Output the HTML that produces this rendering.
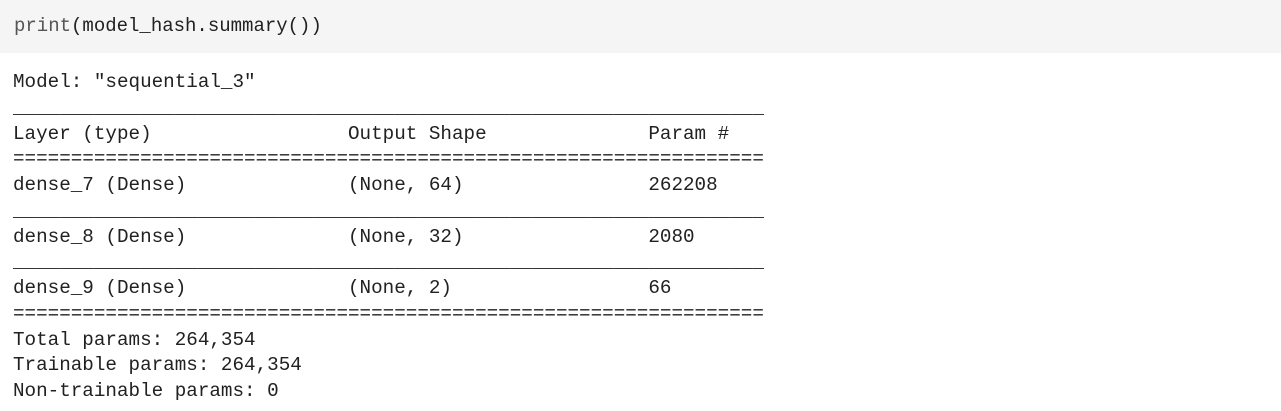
<!DOCTYPE html>
<html><head><style>
body{margin:0;background:#fff;width:1281px;height:411px;overflow:hidden;font-family:"Liberation Mono",monospace;font-size:19.25px;color:#212121}
.code{position:absolute;left:0;top:0;width:1281px;height:53px;background:#f5f5f5}
.code pre{position:absolute;left:14px;top:13px;margin:0;font:inherit;font-size:19px;line-height:26px}
.out{position:absolute;left:13px;top:70px;margin:0;font:inherit;line-height:25.75px;white-space:pre}
.g{color:#555}
</style></head><body>
<div class="code"><pre><span class="g">print</span>(model_hash.summary())</pre></div>
<pre class="out">Model: "sequential_3"
_________________________________________________________________
Layer (type)                 Output Shape              Param #   
=================================================================
dense_7 (Dense)              (None, 64)                262208    
_________________________________________________________________
dense_8 (Dense)              (None, 32)                2080      
_________________________________________________________________
dense_9 (Dense)              (None, 2)                 66        
=================================================================
Total params: 264,354
Trainable params: 264,354
Non-trainable params: 0</pre>
</body></html>
